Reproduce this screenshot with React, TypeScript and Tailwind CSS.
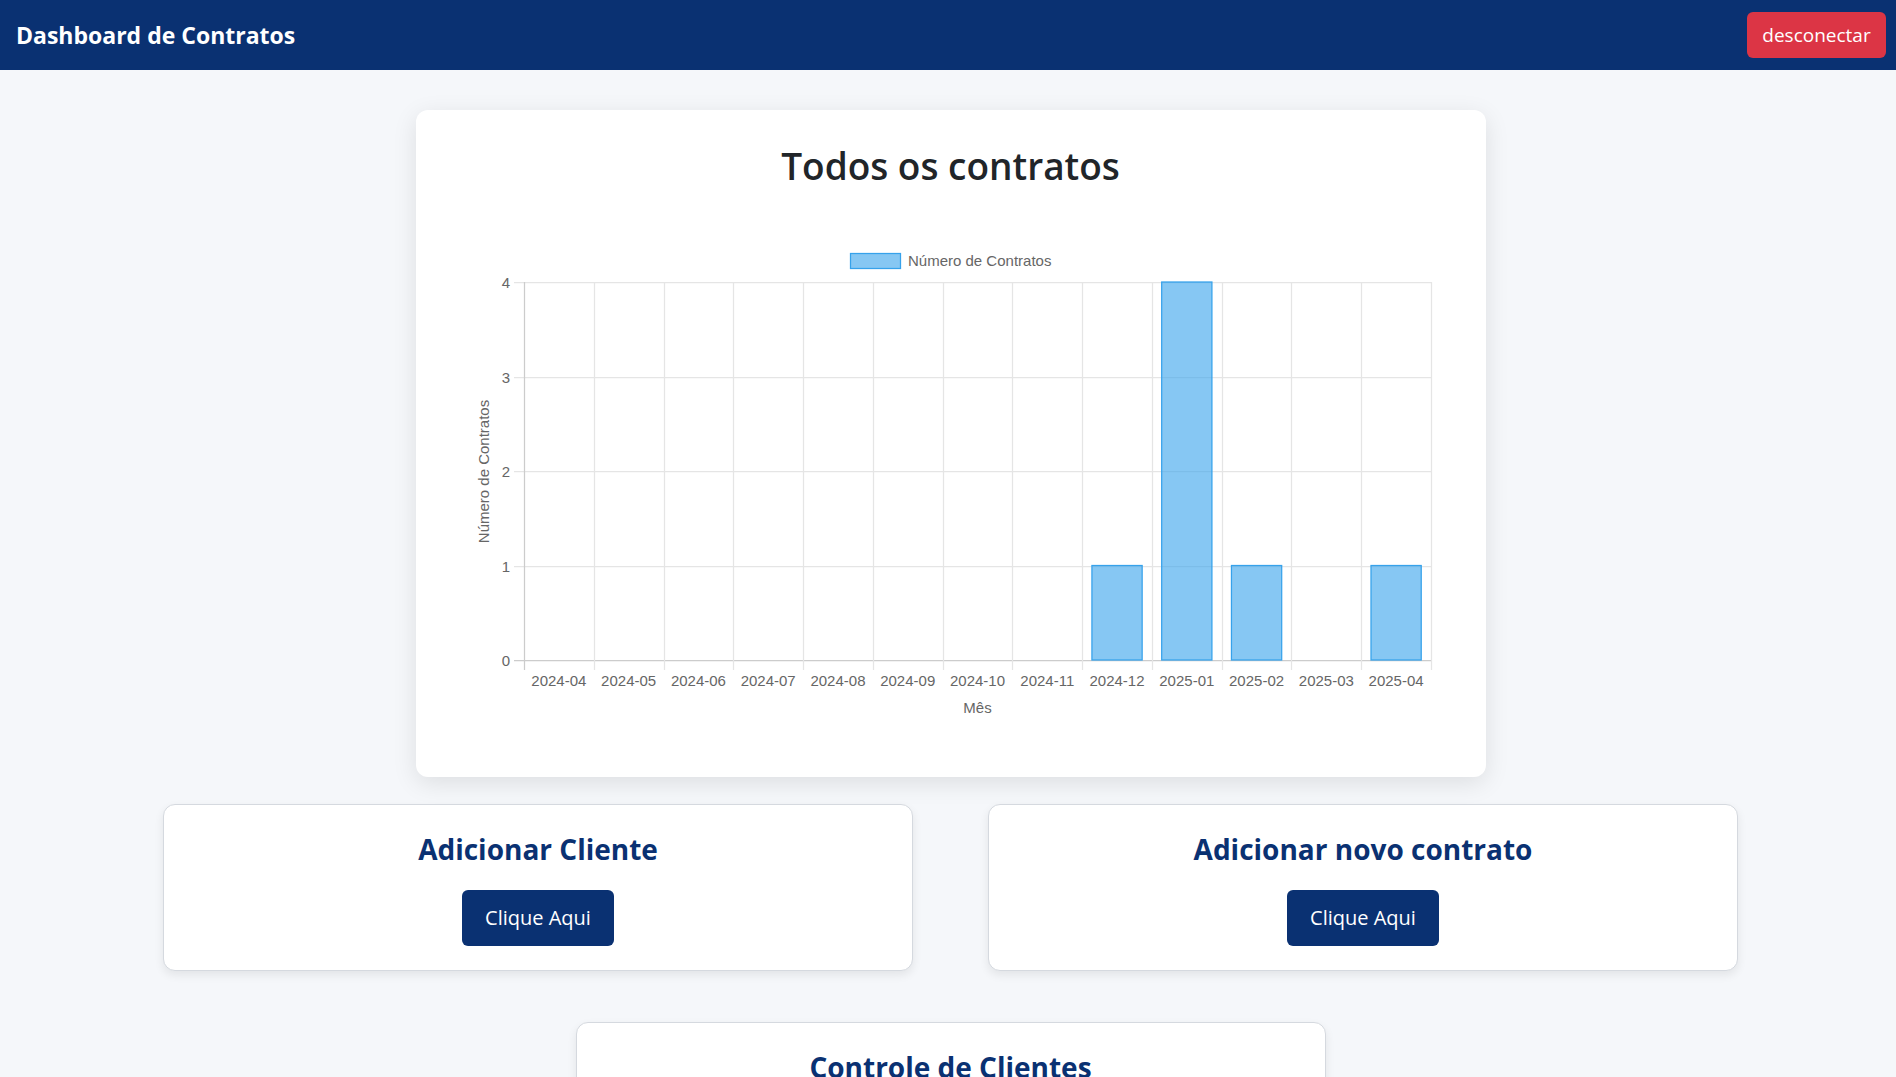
import React from 'react';

const months = [
  '2024-04', '2024-05', '2024-06', '2024-07', '2024-08', '2024-09', '2024-10',
  '2024-11', '2024-12', '2025-01', '2025-02', '2025-03', '2025-04',
];
const counts = [0, 0, 0, 0, 0, 0, 0, 0, 1, 4, 1, 0, 1];

// chart geometry, relative to the card's left edge
const left = 108;
const right = 1015;
const top = 82;
const bottom = 460;
const step = (right - left) / months.length;
const yOf = (v: number) => bottom - ((bottom - top) / 4) * v;

const ContractsChart: React.FC = () => {
  const barW = step * 0.72;
  return (
    <svg width={1070} height={540} className="block" style={{ fontFamily: '"Liberation Sans", Arial, sans-serif' }}>
      {/* legend */}
      <rect x={434.5} y={53.5} width={50} height={15} fill="rgba(54,162,235,0.6)" stroke="rgb(54,162,235)" strokeWidth={1.25} />
      <text x={492} y={66} fontSize={15} fill="#666">Número de Contratos</text>

      {/* horizontal grid */}
      {[0, 1, 2, 3, 4].map((v) => (
        <g key={v}>
          <line x1={left - 10} x2={right} y1={Math.round(yOf(v)) + 0.5} y2={Math.round(yOf(v)) + 0.5} stroke={v === 0 ? '#cccccc' : '#e5e5e5'} strokeWidth={1.25} />
          <text x={left - 14} y={Math.round(yOf(v)) + 5.5} fontSize={15} fill="#666" textAnchor="end">{v}</text>
        </g>
      ))}

      {/* vertical grid */}
      {Array.from({ length: months.length + 1 }).map((_, k) => (
        <line key={k} x1={Math.round(left + step * k) + 0.5} x2={Math.round(left + step * k) + 0.5} y1={top} y2={bottom + 10} stroke={k === 0 ? '#cccccc' : '#e5e5e5'} strokeWidth={1.25} />
      ))}

      {/* bars */}
      {counts.map((c, i) =>
        c > 0 ? (
          <rect
            key={i}
            x={left + step * (i + 0.5) - barW / 2}
            y={yOf(c)}
            width={barW}
            height={bottom - yOf(c)}
            fill="rgba(54,162,235,0.6)"
            stroke="rgb(54,162,235)"
            strokeWidth={1.25}
          />
        ) : null
      )}

      {/* x labels */}
      {months.map((m, i) => (
        <text key={m} x={left + step * (i + 0.5)} y={486} fontSize={15} fill="#666" textAnchor="middle">{m}</text>
      ))}

      <text x={(left + right) / 2} y={512.5} fontSize={15} fill="#666" textAnchor="middle">Mês</text>
      <text x={0} y={0} fontSize={15} fill="#666" textAnchor="middle" transform="translate(73 271.5) rotate(-90)">Número de Contratos</text>
    </svg>
  );
};

const ActionCard: React.FC<{ title: string }> = ({ title }) => (
  <div className="w-[750px] h-[167px] bg-white rounded-xl border border-[#d5d9df] shadow-[0_4px_10px_rgba(0,0,0,0.08)] flex flex-col items-center">
    <h2 className="mt-[25px] text-[28px] leading-[38px] font-bold text-[#0a3172]">{title}</h2>
    <button className="mt-[22px] h-[56px] w-[152px] rounded-md bg-[#0a3172] text-white text-[20px]">Clique Aqui</button>
  </div>
);

export default function App() {
  return (
    <div className="min-h-screen bg-[#f5f7fa]" style={{ fontFamily: '"Open Sans", "Noto Sans", sans-serif' }}>
      <header className="h-[70px] bg-[#0a3172] flex items-center justify-between pl-4 pr-[10px]">
        <h1 className="text-white text-[23px] font-bold">Dashboard de Contratos</h1>
        <button className="h-[46px] w-[139px] rounded-md bg-[#dc3545] text-white text-[19px]">desconectar</button>
      </header>

      <main className="flex flex-col items-center pt-[40px] pb-10 pl-[5px]">
        <div className="w-[1070px] h-[667px] bg-white rounded-xl shadow-[0_6px_24px_rgba(0,0,0,0.1)]">
          <h2 className="pt-[32px] text-center text-[37px] leading-[48px] font-semibold text-[#212529]">Todos os contratos</h2>
          <div className="mt-[10px]">
            <ContractsChart />
          </div>
        </div>

        <div className="mt-[27px] flex gap-[75px]">
          <ActionCard title="Adicionar Cliente" />
          <ActionCard title="Adicionar novo contrato" />
        </div>

        <div className="mt-[51px]">
          <ActionCard title="Controle de Clientes" />
        </div>
      </main>
    </div>
  );
}
